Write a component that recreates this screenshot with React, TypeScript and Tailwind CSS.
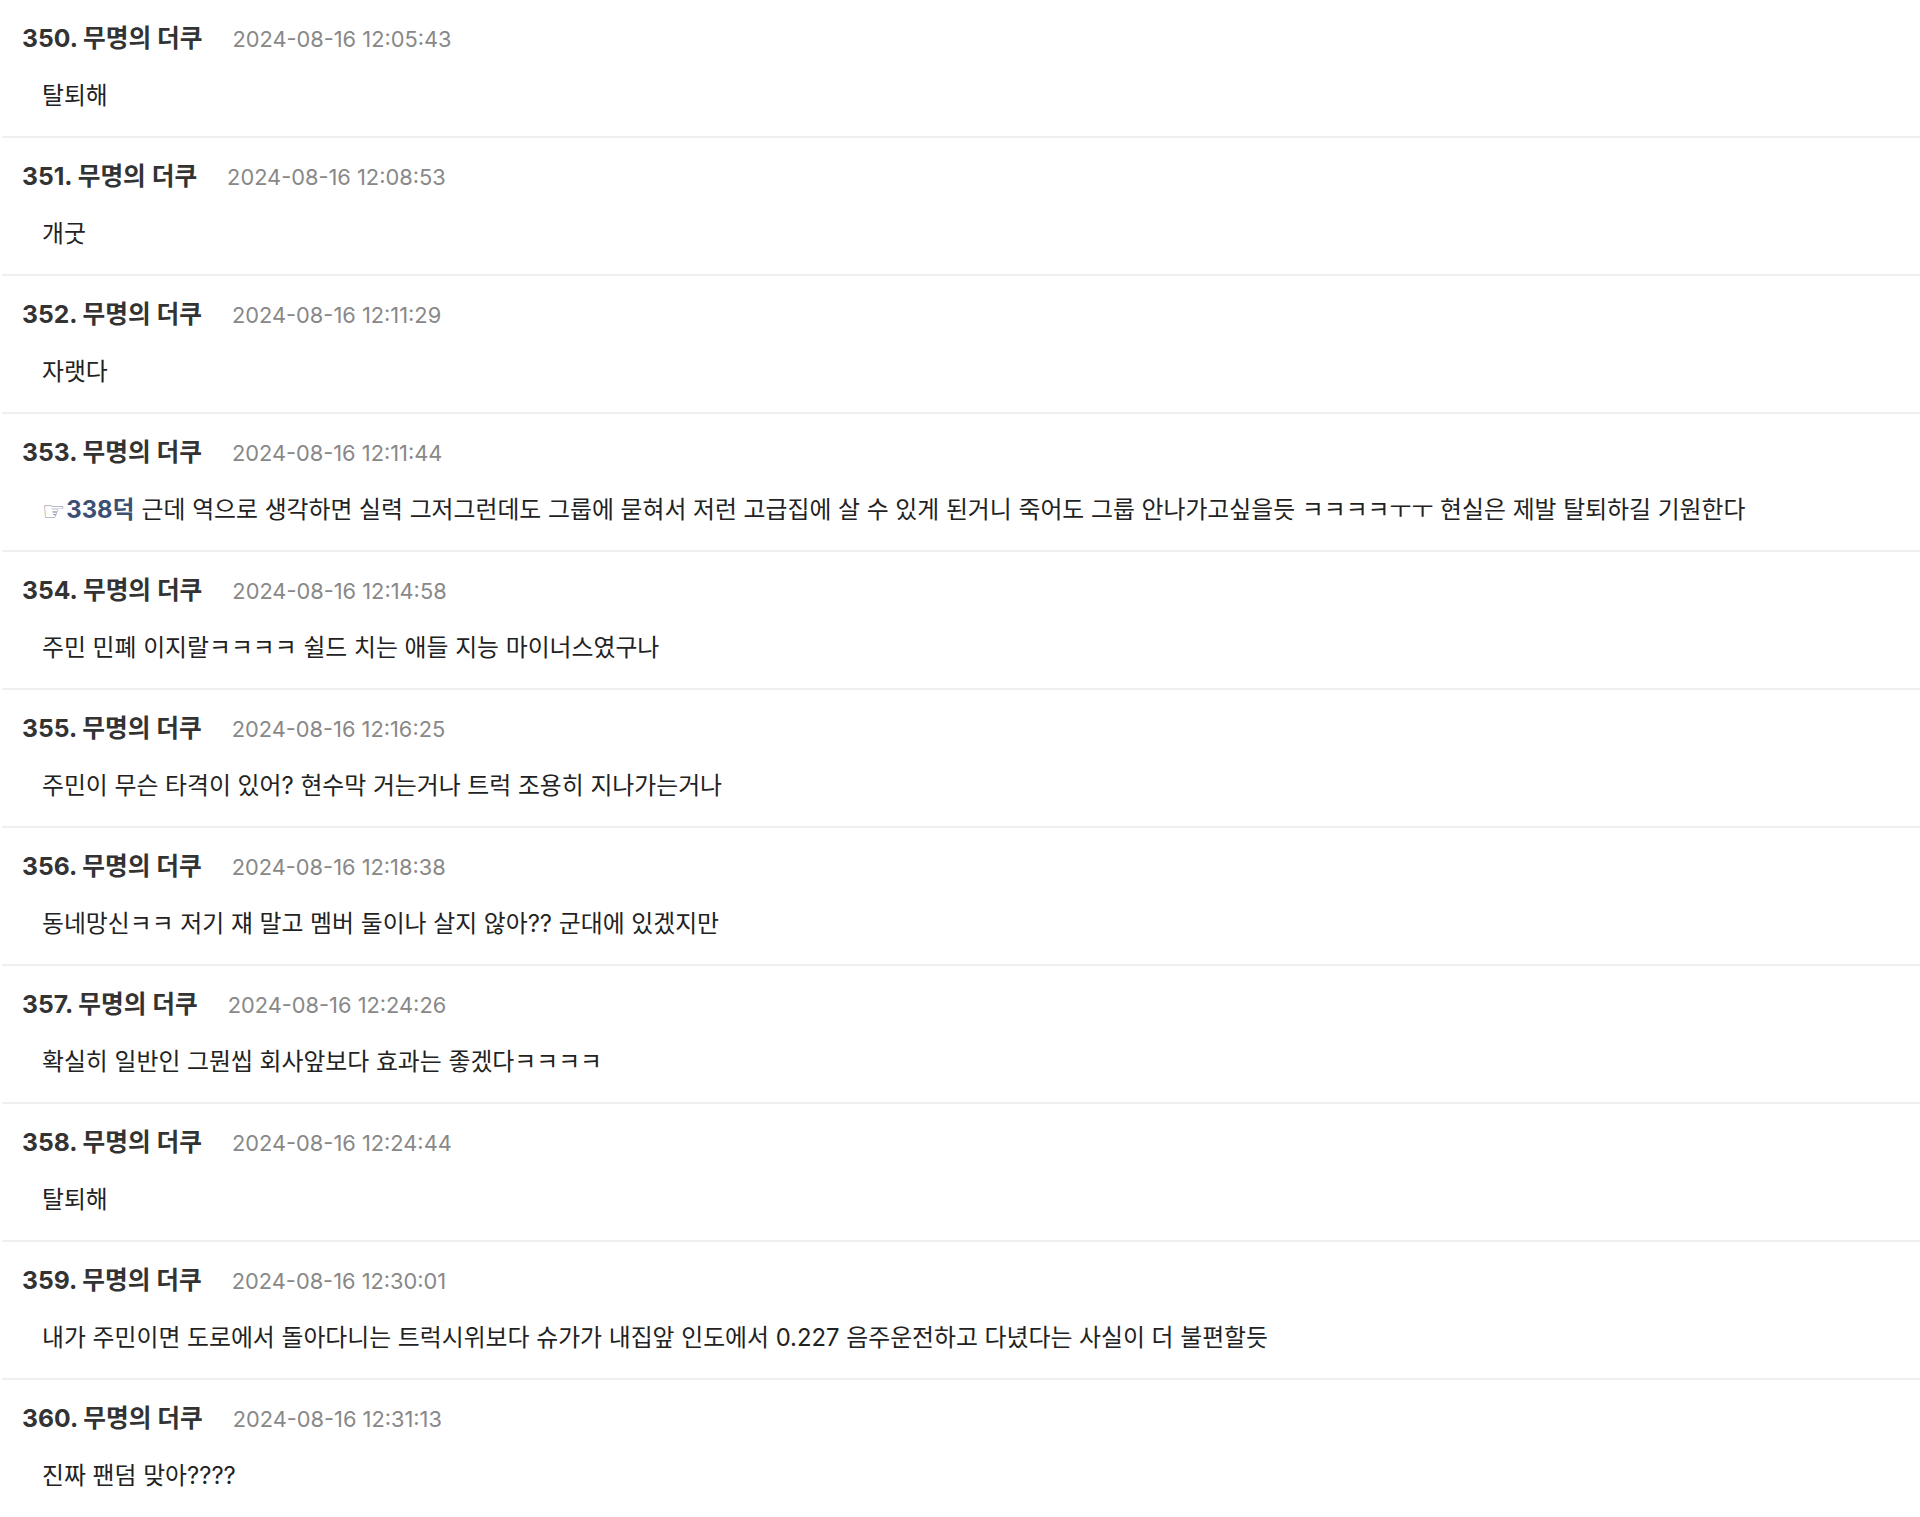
import React from 'react';

type Comment = {
  no: number;
  time: string;
  ref?: string;
  body: string;
};

const comments: Comment[] = [
  { no: 350, time: '2024-08-16 12:05:43', body: '탈퇴해' },
  { no: 351, time: '2024-08-16 12:08:53', body: '개굿' },
  { no: 352, time: '2024-08-16 12:11:29', body: '자랫다' },
  {
    no: 353,
    time: '2024-08-16 12:11:44',
    ref: '338덕',
    body: '근데 역으로 생각하면 실력 그저그런데도 그룹에 묻혀서 저런 고급집에 살 수 있게 된거니 죽어도 그룹 안나가고싶을듯 ㅋㅋㅋㅋㅜㅜ 현실은 제발 탈퇴하길 기원한다',
  },
  { no: 354, time: '2024-08-16 12:14:58', body: '주민 민폐 이지랄ㅋㅋㅋㅋ 쉴드 치는 애들 지능 마이너스였구나' },
  { no: 355, time: '2024-08-16 12:16:25', body: '주민이 무슨 타격이 있어? 현수막 거는거나 트럭 조용히 지나가는거나' },
  { no: 356, time: '2024-08-16 12:18:38', body: '동네망신ㅋㅋ 저기 쟤 말고 멤버 둘이나 살지 않아?? 군대에 있겠지만' },
  { no: 357, time: '2024-08-16 12:24:26', body: '확실히 일반인 그뭔씹 회사앞보다 효과는 좋겠다ㅋㅋㅋㅋ' },
  { no: 358, time: '2024-08-16 12:24:44', body: '탈퇴해' },
  { no: 359, time: '2024-08-16 12:30:01', body: '내가 주민이면 도로에서 돌아다니는 트럭시위보다 슈가가 내집앞 인도에서 0.227 음주운전하고 다녔다는 사실이 더 불편할듯' },
  { no: 360, time: '2024-08-16 12:31:13', body: '진짜 팬덤 맞아????' },
];

const App: React.FC = () => {
  return (
    <div
      className="min-h-screen bg-white text-[#222]"
      style={{ fontFamily: '"Inter", "Noto Sans CJK KR", sans-serif' }}
    >
      <ul className="pl-[2px]">
        {comments.map((c, i) => (
          <li
            key={c.no}
            className={`pt-[24px] pb-[25px] ${i < comments.length - 1 ? 'border-b-2 border-[#efefef]' : ''}`}
          >
            <div className="flex items-center h-[30px] pl-[20px]">
              <span className="text-[24.7px] font-bold text-[#333]">
                {c.no}. 무명의 더쿠
              </span>
              <span className="ml-[30px] text-[21.8px] text-[#888]">{c.time}</span>
            </div>
            <div className="mt-[27px] h-[30px] flex items-center pl-[40px] text-[23.85px] text-[#222]">
              {c.ref && (
                <>
                  <span
                    className="text-[26px] leading-none text-[#7d889c] mr-[1px] translate-y-[1px]"
                    style={{ fontFamily: '"DejaVu Sans", sans-serif' }}
                  >
                    ☞
                  </span>
                  <span className="font-bold text-[#3c5073] mr-[7px]">{c.ref}</span>
                </>
              )}
              <span>{c.body}</span>
            </div>
          </li>
        ))}
      </ul>
    </div>
  );
};

export default App;
